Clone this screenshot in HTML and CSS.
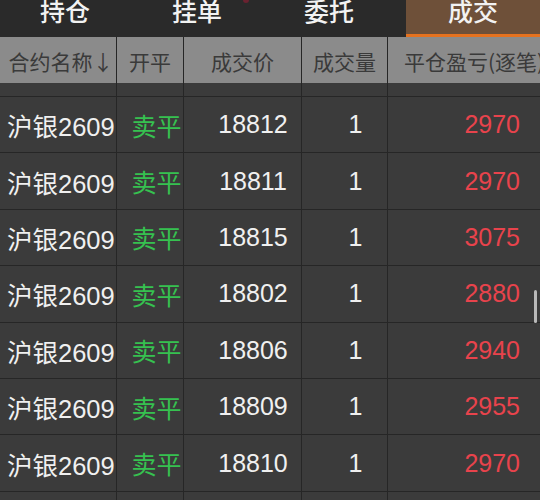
FILE: index.html
```html
<!DOCTYPE html>
<html>
<head>
<meta charset="utf-8">
<link rel="stylesheet" href="styles.css">
</head>
<body>
<div class="tabs">
  <div class="tab t1"><span>持仓</span></div>
  <div class="tab t2"><span>挂单</span><i class="dot"></i></div>
  <div class="tab t3"><span>委托</span></div>
  <div class="tab t4 active"><span>成交</span></div>
</div>

<div class="grid head">
  <div class="cell c-name">合约名称↓</div>
  <div class="cell">开平</div>
  <div class="cell">成交价</div>
  <div class="cell">成交量</div>
  <div class="cell c-pl">平仓盈亏(逐笔)</div>
</div>

<div class="grid row partial">
  <div class="cell"></div><div class="cell"></div><div class="cell"></div><div class="cell"></div><div class="cell"></div>
</div>

<div id="rows"></div>

<div class="scrollbar"></div>

<script>
var trades = [
  ["18812", "2970"],
  ["18811", "2970"],
  ["18815", "3075"],
  ["18802", "2880"],
  ["18806", "2940"],
  ["18809", "2955"],
  ["18810", "2970"],
  ["", ""]
];
var rows = document.getElementById("rows");
for (var i = 0; i < trades.length; i++) {
  var r = document.createElement("div");
  r.className = "grid row";
  var empty = trades[i][0] == "";
  r.innerHTML =
    '<div class="cell name">' + (empty ? '' : '沪银2609') + '</div>' +
    '<div class="cell side">' + (empty ? '' : '卖平') + '</div>' +
    '<div class="cell price">' + trades[i][0] + '</div>' +
    '<div class="cell qty">' + (empty ? '' : '1') + '</div>' +
    '<div class="cell pl">' + trades[i][1] + '</div>';
  rows.appendChild(r);
}
</script>
</body>
</html>
```
FILE: styles.css
```css
html, body {
  margin: 0;
  padding: 0;
  background: #3b3b3b;
  overflow: hidden;
  font-family: "Liberation Sans", "Noto Sans CJK SC", sans-serif;
}

.tabs {
  display: flex;
  height: 37px;
  background: #2a2a2a;
}

.tab {
  position: relative;
  box-sizing: border-box;
  height: 37px;
  display: flex;
  justify-content: center;
  color: #f2f2f2;
  font-size: 25px;
  overflow: hidden;
}

.tab span {
  line-height: 25px;
  margin-top: -2px;
  font-family: "Noto Sans CJK SC", sans-serif;
  font-weight: 500;
}

.t1 { width: 130px; }
.t2 { width: 134px; }
.t3 { width: 142px; padding-right: 12px; }
.t4 { width: 134px; }

.tab.active {
  background: #6e5039;
  border-bottom: 3px solid #e5721f;
}

.dot {
  position: absolute;
  left: 113px;
  top: -3px;
  width: 6px;
  height: 6px;
  border-radius: 50%;
  background: #6a2230;
}

.grid {
  display: grid;
  grid-template-columns: 117px 67px 118px 86px 152px;
}

.cell {
  box-sizing: border-box;
  border-right: 1px solid #262626;
  white-space: nowrap;
  overflow: hidden;
  display: flex;
  align-items: center;
  justify-content: center;
}

.cell:last-child {
  border-right: none;
}

.head {
  height: 46px;
  background: #8b8b8b;
  color: #3a3a3a;
  font-size: 21px;
  font-family: "Noto Sans CJK SC", sans-serif;
}

.head .cell {
  padding-top: 1px;
}

.head .c-name {
  padding-left: 6px;
}

.head .c-pl {
  justify-content: flex-start;
  padding-left: 16px;
}

.row {
  height: 56.4px;
  background: #3b3b3b;
  color: #f0f0f0;
  font-size: 25px;
}

.row .cell {
  border-bottom: 1px solid #262626;
}

.row.partial {
  height: 14px;
}

.row .name {
  justify-content: flex-start;
  padding-left: 7px;
  font-size: 25.5px;
}

.row .side {
  color: #36c150;
  padding-left: 13px;
}

.row .price {
  padding-left: 21px;
}

.row .qty {
  padding-left: 22px;
}

.row .pl {
  justify-content: flex-end;
  padding-right: 20px;
  color: #e8434c;
}

.scrollbar {
  position: absolute;
  left: 534px;
  top: 290px;
  width: 3px;
  height: 33px;
  border-radius: 2px;
  background: #b9b9b9;
}
```
